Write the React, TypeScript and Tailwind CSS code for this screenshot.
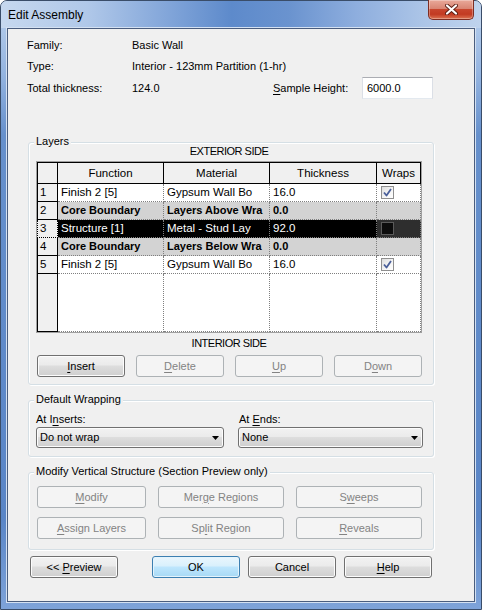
import type { ReactNode } from "react";

function Mn({ children }: { children: string }) {
  return <span className="underline decoration-1 underline-offset-[2px]">{children}</span>;
}

function Button({
  className = "",
  disabled = false,
  primary = false,
  children,
}: {
  className?: string;
  disabled?: boolean;
  primary?: boolean;
  children: ReactNode;
}) {
  const look = disabled
    ? "border-[#adb2b5] bg-[#f4f4f4] text-[#838383]"
    : primary
      ? "border-[#3c7fb1] bg-[linear-gradient(to_bottom,#eaf6fd_0%,#d9f0fc_45%,#bee6fd_50%,#a7d9f5_100%)] text-black shadow-[inset_0_0_0_1px_#e4f4fd]"
      : "border-[#707070] bg-[linear-gradient(to_bottom,#f2f2f2_0%,#ebebeb_45%,#dddddd_50%,#cfcfcf_100%)] text-black shadow-[inset_0_0_0_1px_#fcfcfc]";
  return (
    <button
      type="button"
      className={`flex h-[22px] items-center justify-center rounded-[3px] border text-[11px] leading-[13px] ${look} ${className}`}
    >
      {children}
    </button>
  );
}

function Group({ title, className = "", children }: { title: string; className?: string; children: ReactNode }) {
  return (
    <div
      className={`relative rounded-[3px] border border-[#d5dfe5] shadow-[inset_1px_1px_0_#fff,1px_1px_0_#fff] ${className}`}
    >
      <span className="absolute left-[5px] top-[-8px] bg-[#f0f0f0] px-[2px] leading-[13px]">{title}</span>
      {children}
    </div>
  );
}

function Combo({ className = "", value }: { className?: string; value: string }) {
  return (
    <div
      className={`flex h-[21px] items-center justify-between rounded-[3px] border border-[#707070] bg-[linear-gradient(to_bottom,#f2f2f2_0%,#ebebeb_45%,#dddddd_50%,#cfcfcf_100%)] pl-[3px] pr-[4px] shadow-[inset_0_0_0_1px_#fcfcfc] ${className}`}
    >
      <span>{value}</span>
      <svg width="7" height="4" viewBox="0 0 7 4">
        <path d="M0 0H7L3.5 4Z" fill="#000" />
      </svg>
    </div>
  );
}

function Check({ dark = false, checked = false }: { dark?: boolean; checked?: boolean }) {
  if (dark) {
    return <span className="block h-[13px] w-[13px] border border-[#5a5a5a] bg-[#0c0c0c]" />;
  }
  return (
    <span className="flex h-[13px] w-[13px] items-center justify-center border border-[#8f8f8f] bg-[linear-gradient(135deg,#dedede_0%,#f6f6f6_60%,#ffffff_100%)]">
      {checked && (
        <svg width="11" height="11" viewBox="0 0 11 11">
          <path d="M2 5.5L4.5 8.5L9 2" fill="none" stroke="#4a5f9a" strokeWidth="1.8" strokeLinejoin="round" />
        </svg>
      )}
    </span>
  );
}

type Row = { n: string; f: string; m: string; t: string; kind: "normal" | "core" | "sel"; wrap?: boolean };

const rows: Row[] = [
  { n: "1", f: "Finish 2 [5]", m: "Gypsum Wall Bo", t: "16.0", kind: "normal", wrap: true },
  { n: "2", f: "Core Boundary", m: "Layers Above Wra", t: "0.0", kind: "core" },
  { n: "3", f: "Structure [1]", m: "Metal - Stud Lay", t: "92.0", kind: "sel", wrap: false },
  { n: "4", f: "Core Boundary", m: "Layers Below Wra", t: "0.0", kind: "core" },
  { n: "5", f: "Finish 2 [5]", m: "Gypsum Wall Bo", t: "16.0", kind: "normal", wrap: true },
];

function LayersTable() {
  const head = "flex items-center justify-center border-t border-r border-b border-black bg-[#f0f0f0] text-[11.5px]";
  const dot = "flex items-center overflow-hidden whitespace-nowrap border-r border-b border-dotted border-[#7f7f7f] pl-[3px]";
  return (
    <div className="w-[386px] border border-[#a0a0a0] bg-white">
      <div className="grid grid-cols-[21px_106px_106px_107px_44px]">
        <div className="h-[22px] border border-black bg-[#f0f0f0]" />
        <div className={head}>Function</div>
        <div className={head}>Material</div>
        <div className={head}>Thickness</div>
        <div className={head}>Wraps</div>

        {rows.map((r) => {
          const bg =
            r.kind === "sel" ? "bg-black text-white" : r.kind === "core" ? "bg-[#d3d3d3] font-bold" : "bg-white";
          const size = r.kind === "core" ? "text-[11px]" : "text-[11.5px]";
          return (
            <div key={r.n} className="contents">
              <div
                className={`flex h-[18px] items-center border-r border-b border-l bg-[#f0f0f0] pl-[2px] text-[11.5px] ${
                  r.kind === "sel" ? "border-dotted border-black" : "border-black"
                }`}
              >
                {r.n}
              </div>
              <div className={`${dot} ${bg} ${size}`}>{r.f}</div>
              <div className={`${dot} ${bg} ${size}`}>{r.m}</div>
              <div className={`${dot} ${bg} ${size}`}>{r.t}</div>
              <div className={`${dot} ${r.kind === "sel" ? "bg-[#2e2e2e]" : r.kind === "core" ? "bg-[#d3d3d3]" : "bg-white"}`}>
                {r.wrap !== undefined && (
                  <span className="pl-[1px]">
                    <Check dark={r.kind === "sel"} checked={r.wrap} />
                  </span>
                )}
              </div>
            </div>
          );
        })}

        <div className="h-[58px] border-r border-b border-l border-black bg-[#f0f0f0]" />
        <div className={`${dot} bg-white`} />
        <div className={`${dot} bg-white`} />
        <div className={`${dot} bg-white`} />
        <div className={`${dot} bg-white`} />
      </div>
    </div>
  );
}

export default function App() {
  return (
    <div className="flex h-[610px] w-[482px] flex-col rounded-t-[7px] border border-[#3a4d69] bg-[linear-gradient(to_bottom,#bcd2ee_0%,#94b4e0_12%,#6690cc_22%,#5985c7_85%,#7ea3d9_100%)] font-['Liberation_Sans',Arial,sans-serif] text-[11px] leading-[13px] text-black">
      {/* title bar */}
      <div className="flex h-[27px] items-start justify-between rounded-t-[6px] bg-[linear-gradient(to_right,#c6d8ef_0%,#b0c8e9_18%,#84a7da_34%,#5d8acb_48%,#6a93cf_60%,#8eaede_74%,#acc5e7_88%,#bfd3ed_100%)]">
        <span className="pl-[7px] pt-[7px] text-[12px] leading-[14px] text-black">Edit Assembly</span>
        <div className="mr-[7px] -mt-[1px] flex h-[20px] w-[46px] items-center justify-center rounded-b-[5px] border border-t-0 border-[#7e2d22] bg-[linear-gradient(to_bottom,#e9a99a_0%,#d98573_45%,#c8452d_50%,#c23a22_75%,#dc7352_100%)] shadow-[inset_0_0_0_1px_rgba(255,255,255,0.3)]">
          <svg width="13" height="11" viewBox="0 0 13 11">
            <path d="M2 1.5L11 9.5M11 1.5L2 9.5" stroke="#5c1e14" strokeWidth="4" strokeLinecap="round" />
            <path d="M2 1.5L11 9.5M11 1.5L2 9.5" stroke="#fff" strokeWidth="2.2" strokeLinecap="round" />
          </svg>
        </div>
      </div>

      {/* client area */}
      <div className="mx-[6px] mb-[7px] flex-1 border border-[#4a5d7e] bg-[#f0f0f0] shadow-[0_0_0_1px_#d4e1f2]">
        <div className="pl-[19px] pt-[6px]">
          <div className="flex h-[21px] items-center">
            <span className="w-[105px]">Family:</span>
            <span>Basic Wall</span>
          </div>
          <div className="flex h-[21px] items-center">
            <span className="w-[105px]">Type:</span>
            <span>Interior - 123mm Partition (1-hr)</span>
          </div>
          <div className="flex h-[22px] items-center">
            <span className="w-[105px]">Total thickness:</span>
            <span className="w-[141px]">124.0</span>
            <span className="w-[89px]">
              <Mn>S</Mn>ample Height:
            </span>
            <div className="flex h-[22px] w-[71px] items-center border border-[#dbdfe6] border-t-[#abadb3] border-b-[#e3e9ef] bg-white pl-[4px]">
              6000.0
            </div>
          </div>
        </div>

        <Group title="Layers" className="ml-[20px] mt-[43px] w-[406px] pb-[7px] pl-[7px] pt-[2px]">
          <div className="w-[386px] text-center tracking-[-0.5px]">EXTERIOR SIDE</div>
          <div className="mt-[3px]">
            <LayersTable />
          </div>
          <div className="mt-[4px] w-[386px] text-center tracking-[-0.5px]">INTERIOR SIDE</div>
          <div className="ml-[1px] mt-[5px] flex gap-[11px]">
            <Button className="w-[88px]">
              <Mn>I</Mn>nsert
            </Button>
            <Button className="w-[88px]" disabled>
              <Mn>D</Mn>elete
            </Button>
            <Button className="w-[88px]" disabled>
              <Mn>U</Mn>p
            </Button>
            <Button className="w-[88px]" disabled>
              D<Mn>o</Mn>wn
            </Button>
          </div>
        </Group>

        <Group title="Default Wrapping" className="ml-[20px] mt-[15px] w-[406px] pb-[8px] pl-[7px] pt-[12px]">
          <div className="flex gap-[14px]">
            <div className="w-[188px]">
              <div className="h-[13px]">
                At I<Mn>n</Mn>serts:
              </div>
              <Combo className="mt-[1px]" value="Do not wrap" />
            </div>
            <div className="w-[185px]">
              <div className="h-[13px] pl-[1px]">
                At <Mn>E</Mn>nds:
              </div>
              <Combo className="mt-[1px]" value="None" />
            </div>
          </div>
        </Group>

        <Group
          title="Modify Vertical Structure (Section Preview only)"
          className="ml-[20px] mt-[15px] w-[406px] pb-[10px] pl-[8px] pt-[13px]"
        >
          <div className="grid grid-cols-[109px_126px_126px] gap-x-[12px] gap-y-[9px]">
            <Button disabled>
              <Mn>M</Mn>odify
            </Button>
            <Button disabled>
              Mer<Mn>g</Mn>e Regions
            </Button>
            <Button disabled>
              S<Mn>w</Mn>eeps
            </Button>
            <Button disabled>
              <Mn>A</Mn>ssign Layers
            </Button>
            <Button disabled>
              Sp<Mn>l</Mn>it Region
            </Button>
            <Button disabled>
              <Mn>R</Mn>eveals
            </Button>
          </div>
        </Group>

        <div className="mt-[6px] flex pl-[22px]">
          <Button className="w-[88px]">
              &lt;&lt;&nbsp;<Mn>P</Mn>review
          </Button>
          <Button className="ml-[34px] w-[88px]" primary>
            OK
          </Button>
          <Button className="ml-[8px] w-[88px]">Cancel</Button>
          <Button className="ml-[8px] w-[88px]">
            <Mn>H</Mn>elp
          </Button>
        </div>
      </div>
    </div>
  );
}
